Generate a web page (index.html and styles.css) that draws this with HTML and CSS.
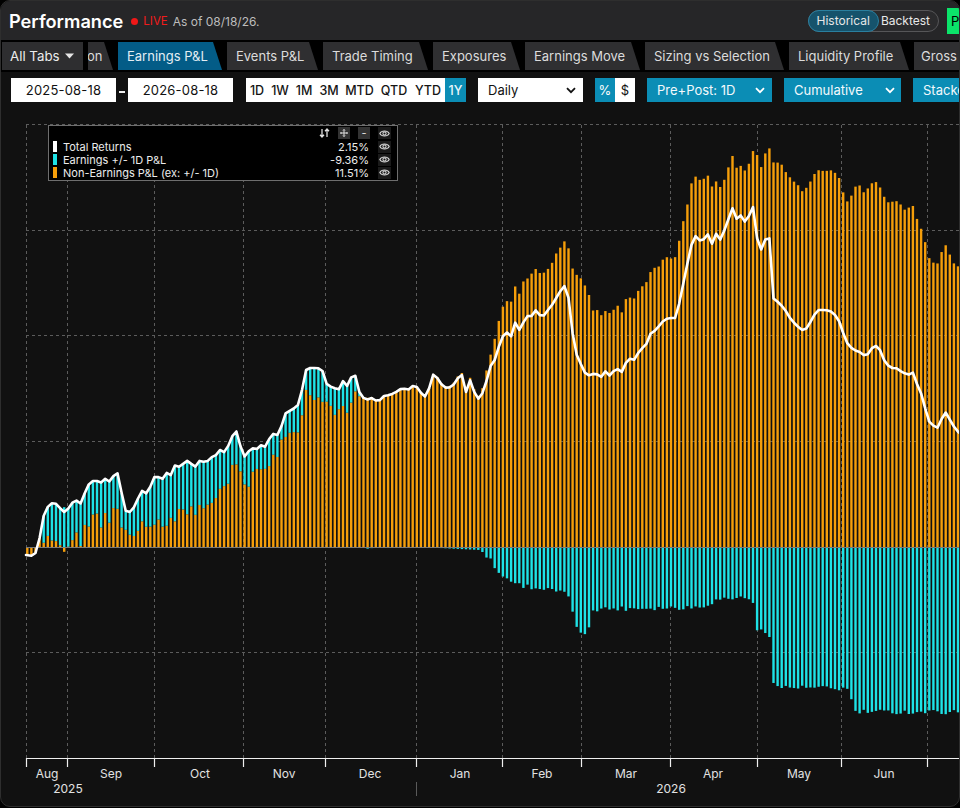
FILE: index.html
```html
<!DOCTYPE html>
<html lang="en">
<head>
<meta charset="utf-8">
<title>Performance</title>
<link rel="stylesheet" href="styles.css">
</head>
<body>
<div class="panel">
  <header class="topbar">
    <div class="title-group">
      <h1 class="title">Performance</h1>
      <span class="live-dot"></span>
      <span class="live">LIVE</span>
      <span class="asof">As of 08/18/26.</span>
    </div>
    <div class="top-right">
      <div class="toggle">
        <span class="toggle-opt active">Historical</span>
        <span class="toggle-opt">Backtest</span>
      </div>
      <div class="green-btn">P</div>
    </div>
  </header>

  <nav class="tabs">
    <div class="tab all">All Tabs <svg class="caret" width="9" height="6" viewBox="0 0 9 6"><path d="M0 0.5H9L4.5 5.5Z" fill="#e6e6e6"/></svg></div>
    <div class="tab partial">on</div>
    <div class="tab active w104">Earnings P&amp;L</div>
    <div class="tab w91">Events P&amp;L</div>
    <div class="tab w105">Trade Timing</div>
    <div class="tab w87">Exposures</div>
    <div class="tab w115">Earnings Move</div>
    <div class="tab w139">Sizing vs Selection</div>
    <div class="tab w120">Liquidity Profile</div>
    <div class="tab w80">Gross</div>
  </nav>

  <div class="controls">
    <div class="date">2025-08-18</div>
    <span class="dash"></span>
    <div class="date">2026-08-18</div>
    <div class="periods">
      <span class="per p22">1D</span>
      <span class="per p24">1W</span>
      <span class="per p24">1M</span>
      <span class="per p26">3M</span>
      <span class="per p35">MTD</span>
      <span class="per p34">QTD</span>
      <span class="per p34">YTD</span>
      <span class="per p21 on">1Y</span>
    </div>
    <div class="select white daily">Daily<svg class="chev" width="10" height="7" viewBox="0 0 10 7"><path d="M1 1.2L5 5.2L9 1.2" fill="none" stroke="#111" stroke-width="1.8"/></svg></div>
    <div class="unit">
      <span class="u on">%</span>
      <span class="u">$</span>
    </div>
    <div class="select teal prepost">Pre+Post: 1D<svg class="chev" width="10" height="7" viewBox="0 0 10 7"><path d="M1 1.2L5 5.2L9 1.2" fill="none" stroke="#fff" stroke-width="1.8"/></svg></div>
    <div class="select teal cumul">Cumulative<svg class="chev" width="10" height="7" viewBox="0 0 10 7"><path d="M1 1.2L5 5.2L9 1.2" fill="none" stroke="#fff" stroke-width="1.8"/></svg></div>
    <div class="select teal stacked">Stacked</div>
  </div>

  <div class="chart">
    <svg id="chart" class="chart-svg" xmlns="http://www.w3.org/2000/svg"></svg>
    <div class="legend">
      <div class="legend-head">
        <span class="lg-icon sort"><svg width="11" height="10" viewBox="0 0 11 10"><path d="M3 1V9M1 6.8L3 9L5 6.8M8 9V1M6 3.2L8 1L10 3.2" fill="none" stroke="#e0e0e0" stroke-width="1.3"/></svg></span>
        <span class="lg-icon box"><svg width="8" height="8" viewBox="0 0 8 8"><path d="M4 0.5V7.5M0.5 4H7.5M3 1.5L4 0.5L5 1.5M3 6.5L4 7.5L5 6.5M1.5 3L0.5 4L1.5 5M6.5 3L7.5 4L6.5 5" fill="none" stroke="#e0e0e0" stroke-width="1"/></svg></span>
        <span class="lg-icon box minus">-</span>
        <span class="lg-icon eye"><svg width="11" height="9" viewBox="0 0 11 9"><path d="M0.8 4.5C2.5 1.2 8.5 1.2 10.2 4.5C8.5 7.8 2.5 7.8 0.8 4.5Z" fill="none" stroke="#d0d0d0" stroke-width="1.1"/><circle cx="5.5" cy="4.5" r="1.6" fill="none" stroke="#d0d0d0" stroke-width="1.1"/></svg></span>
      </div>
      <div class="legend-row">
        <span class="sw sw-white"></span><span class="lg-name">Total Returns</span><span class="lg-val">2.15%</span>
        <span class="lg-icon eye"><svg width="11" height="9" viewBox="0 0 11 9"><path d="M0.8 4.5C2.5 1.2 8.5 1.2 10.2 4.5C8.5 7.8 2.5 7.8 0.8 4.5Z" fill="none" stroke="#d0d0d0" stroke-width="1.1"/><circle cx="5.5" cy="4.5" r="1.6" fill="none" stroke="#d0d0d0" stroke-width="1.1"/></svg></span>
      </div>
      <div class="legend-row">
        <span class="sw sw-cyan"></span><span class="lg-name">Earnings +/- 1D P&amp;L</span><span class="lg-val">-9.36%</span>
        <span class="lg-icon eye"><svg width="11" height="9" viewBox="0 0 11 9"><path d="M0.8 4.5C2.5 1.2 8.5 1.2 10.2 4.5C8.5 7.8 2.5 7.8 0.8 4.5Z" fill="none" stroke="#d0d0d0" stroke-width="1.1"/><circle cx="5.5" cy="4.5" r="1.6" fill="none" stroke="#d0d0d0" stroke-width="1.1"/></svg></span>
      </div>
      <div class="legend-row">
        <span class="sw sw-orange"></span><span class="lg-name">Non-Earnings P&amp;L (ex: +/- 1D)</span><span class="lg-val">11.51%</span>
        <span class="lg-icon eye"><svg width="11" height="9" viewBox="0 0 11 9"><path d="M0.8 4.5C2.5 1.2 8.5 1.2 10.2 4.5C8.5 7.8 2.5 7.8 0.8 4.5Z" fill="none" stroke="#d0d0d0" stroke-width="1.1"/><circle cx="5.5" cy="4.5" r="1.6" fill="none" stroke="#d0d0d0" stroke-width="1.1"/></svg></span>
      </div>
    </div>
  </div>
</div>
<script src="script.js"></script>
</body>
</html>
```

FILE: styles.css
```css
* { box-sizing: border-box; margin: 0; padding: 0; }
html, body { background: #000; }
body {
  width: 960px;
  height: 808px;
  overflow: hidden;
  font-family: Inter, "Noto Sans", "Liberation Sans", sans-serif;
  color: #e6e6e6;
}
.panel {
  width: 960px;
  height: 807px;
  border: 1px solid #2e2e2e;
  border-radius: 10px;
  overflow: hidden;
  background: #111;
  display: flex;
  flex-direction: column;
}

/* header */
.topbar {
  height: 39px;
  flex: none;
  background: #262628;
  display: flex;
  align-items: center;
  justify-content: space-between;
  padding-left: 8px;
}
.title-group { display: flex; align-items: center; }
.title { font-size: 18.2px; font-weight: 600; color: #fff; margin-right: 8px; }
.live-dot { width: 7px; height: 7px; border-radius: 50%; background: #f01818; margin-right: 5px; margin-top: 1px; flex: none; }
.live { font-size: 11.5px; color: #f01c1c; margin-right: 5px; margin-top: 1px; }
.asof { font-size: 12px; color: #bdbdbd; margin-top: 1px; }
.top-right { display: flex; align-items: center; margin-right: -18px; }
.toggle {
  display: flex;
  height: 22px;
  border: 1px solid #565658;
  border-radius: 11px;
  background: #2b2b2d;
  margin-right: 8px;
  font-size: 12px;
  color: #e8e8e8;
}
.toggle-opt { display: flex; align-items: center; padding: 0 8px 0 2px; }
.toggle-opt.active {
  background: #16536c;
  border: 1px solid #2a7f9f;
  border-radius: 11px;
  margin: -1px 0 -1px -1px;
  padding: 0 8px 0 8px;
}
.green-btn {
  width: 30px;
  height: 26px;
  background: #0be46a;
  color: #000;
  font-size: 13px;
  line-height: 26px;
  padding-left: 4px;
}

/* tabs */
.tabs {
  height: 32px;
  flex: none;
  background: #000;
  display: flex;
  align-items: flex-start;
  gap: 5px;
  padding: 2px 0 0 1px;
  overflow: hidden;
  white-space: nowrap;
}
.tab {
  flex: none;
  height: 28px;
  line-height: 28px;
  font-size: 13px;
  color: #dcdcdc;
  background: #2f2f31;
  padding-left: 9px;
  overflow: hidden;
  clip-path: polygon(0 0, calc(100% - 9px) 0, 100% 100%, 0 100%);
}
.tab.all {
  width: 81px;
  clip-path: none;
  padding-left: 8px;
  display: flex;
  align-items: center;
  gap: 5px;
  background: #2e2e30;
  color: #ececec;
  font-size: 13.3px;
}
.tab.partial { width: 25px; padding-left: 0; text-indent: -1px; }
.tab.active { background: #035c87; color: #e4eef4; }
.w104 { width: 104px; }
.w91 { width: 91px; }
.w105 { width: 105px; }
.w87 { width: 87px; }
.w115 { width: 115px; }
.w139 { width: 139px; }
.w120 { width: 120px; }
.w80 { width: 80px; padding-left: 7px; }

/* controls */
.controls {
  height: 37px;
  flex: none;
  display: flex;
  align-items: flex-start;
  padding: 6px 0 0 10px;
  white-space: nowrap;
  overflow: hidden;
}
.controls > * { flex: none; }
.date {
  width: 105px;
  height: 24px;
  line-height: 24px;
  background: #fff;
  color: #111;
  text-align: center;
  font-size: 13px;
  letter-spacing: 0.2px;
}
.dash { width: 6px; height: 2px; background: #eee; margin: 13px 3px 0 3px; }
.periods {
  display: flex;
  height: 24px;
  background: #fff;
  margin-left: 13px;
}
.per {
  flex: none;
  display: flex;
  align-items: center;
  justify-content: center;
  font-size: 12.5px;
  font-weight: 500;
  color: #151515;
}
.per.on { background: #0b8db5; color: #eaf6fb; }
.p21 { width: 21px; } .p22 { width: 22px; } .p24 { width: 24px; } .p26 { width: 26px; }
.p34 { width: 34px; } .p35 { width: 35px; }
.select {
  height: 24px;
  margin-left: 12px;
  display: flex;
  align-items: center;
  justify-content: space-between;
  padding: 0 7px 0 10px;
  font-size: 13px;
}
.select.white { background: #fff; color: #111; }
.select.teal { background: #0b8db5; color: #f2f9fc; }
.daily { width: 105px; }
.prepost { width: 125px; }
.cumul { width: 117px; padding-right: 6px; }
.stacked { width: 100px; }
.unit { display: flex; height: 24px; margin-left: 12px; }
.u { width: 20px; display: flex; align-items: center; justify-content: center; font-size: 13px; background: #fff; color: #111; }
.u.on { background: #0b8db5; color: #fff; }

/* chart */
.chart { flex: 1; position: relative; }
.chart-svg { display: block; width: 958px; height: 100%; }
.chart-svg .grid { stroke: #5c5c5c; stroke-width: 1; stroke-dasharray: 3 3; }
.chart-svg .zero { stroke: #7a7a7a; stroke-width: 1.2; }
.chart-svg .axis { stroke: #f0f0f0; stroke-width: 1.2; }
.chart-svg .ybar { stroke: #5a5a5a; stroke-width: 1; }
.chart-svg .o { fill: #f59e0a; }
.chart-svg .c { fill: #1ee2e6; }
.chart-svg .total { fill: none; stroke: #fff; stroke-width: 2.6; stroke-linejoin: round; stroke-linecap: round; }
.chart-svg .mlabel { fill: #e2e2e2; font-size: 12px; font-family: Inter, "Noto Sans", sans-serif; text-anchor: middle; }

.legend {
  position: absolute;
  left: 47px;
  top: 16px;
  width: 350px;
  height: 56px;
  background: #000;
  border: 1px solid #6e6e6e;
  padding: 0 6px 0 4px;
  font-size: 11px;
  color: #ececec;
}
.legend-head { height: 14px; display: flex; justify-content: flex-end; align-items: center; gap: 8px; }
.legend-row { height: 13px; display: flex; align-items: center; }
.lg-icon { display: flex; align-items: center; justify-content: center; flex: none; }
.lg-icon.sort { width: 11px; }
.lg-icon.box { width: 12px; height: 12px; background: #333; color: #e0e0e0; font-size: 11px; line-height: 12px; }
.lg-icon.eye { width: 13px; height: 12px; background: #1a1a1a; }
.sw { width: 4px; height: 11px; margin-right: 6px; flex: none; }
.sw-white { background: #fff; }
.sw-cyan { background: #1ee2e6; }
.sw-orange { background: #f59e0a; }
.lg-name { flex: 1; }
.lg-val { margin-right: 9px; text-align: right; }
```

FILE: script.js
```js
(function () {
  var svg = document.getElementById('chart');
  var r = svg.getBoundingClientRect();
  svg.setAttribute('viewBox', r.left + ' ' + r.top + ' ' + r.width + ' ' + r.height);

  var Z = 547;
  var T_PTS = [[26,555],[33,556],[38,550],[42,520],[46,510],[50,503],[58,504],[62,512],[66,512],[72,503],[76,500],[80,505],[86,490],[90,482],[96,480],[100,484],[104,478],[110,482],[114,475],[118,473],[122,495],[126,512],[130,512],[136,505],[140,492],[144,490],[148,496],[152,480],[156,475],[162,480],[166,472],[170,477],[176,463],[180,468],[186,460],[190,463],[196,467],[200,460],[206,463],[210,458],[216,455],[220,450],[226,453],[230,440],[236,430],[240,445],[246,460],[250,447],[256,450],[260,445],[266,447],[272,432],[276,438],[282,425],[286,412],[292,410],[298,405],[302,390],[306,370],[310,368],[318,368],[324,372],[328,390],[332,385],[338,392],[342,380],[348,387],[352,375],[356,376],[360,395],[366,400],[372,398],[378,402],[384,396],[390,395],[396,392],[402,388],[408,390],[414,385],[418,388],[424,398],[428,392],[434,372],[440,383],[446,388],[452,387],[458,378],[462,375],[466,392],[470,380],[476,397],[480,400],[486,383],[490,367],[496,358],[500,342],[506,330],[510,340],[516,320],[520,332],[526,315],[530,318],[536,310],[542,318],[548,310],[552,305],[558,295],[564,285],[570,302],[574,350],[578,357],[584,372],[590,376],[596,372],[600,380],[604,370],[610,376],[616,368],[622,372],[628,358],[634,360],[640,350],[646,345],[650,334],[656,330],[662,322],[668,318],[676,318],[680,300],[686,270],[693,238],[697,235],[702,245],[706,232],[710,237],[713,247],[717,230],[721,242],[725,228],[730,215],[733,207],[737,220],[741,215],[745,222],[748,218],[753,207],[757,238],[761,250],[765,240],[769,233],[771,260],[773,298],[778,302],[784,308],[790,318],[796,325],[802,330],[808,328],[812,318],[818,310],[826,310],[832,312],[838,318],[842,330],[848,345],[854,350],[860,352],[866,357],[872,348],[878,345],[884,360],[890,368],[896,368],[902,372],[908,375],[914,372],[918,388],[922,395],[928,420],[932,425],[938,428],[942,418],[946,412],[950,420],[956,430],[962,435]];
  var E_PTS = [[26,0],[40,0],[44,25],[50,30],[70,35],[100,39],[118,37],[124,25],[128,20],[140,35],[160,50],[200,47],[240,32],[280,18],[300,22],[310,27],[340,23],[355,19],[360,2],[365,-2],[380,0],[420,0],[480,-3],[486,-8],[492,-15],[500,-28],[520,-38],[560,-45],[570,-50],[576,-80],[580,-88],[588,-85],[592,-62],[700,-60],[720,-52],[752,-50],[756,-82],[770,-88],[774,-140],[850,-142],[853,-165],[962,-165]];

  function interp(a, x) {
    if (x <= a[0][0]) return a[0][1];
    for (var k = 1; k < a.length; k++) {
      if (x <= a[k][0]) {
        var x0 = a[k-1][0], y0 = a[k-1][1], x1 = a[k][0], y1 = a[k][1];
        return y0 + (y1 - y0) * (x - x0) / (x1 - x0);
      }
    }
    return a[a.length-1][1];
  }
  function rnd(i) { var s = Math.sin(i * 127.1 + 311.7) * 43758.5453; return s - Math.floor(s); }
  function rect(x, y, w, h, c) {
    return '<rect class="' + c + '" x="' + x.toFixed(2) + '" y="' + y.toFixed(2) + '" width="' + w + '" height="' + Math.max(h, 0).toFixed(2) + '"/>';
  }

  var out = '';
  var vx = [26, 67, 154, 243, 325, 416, 502, 581, 670, 757, 841, 927];
  var hy = [124.5, 230.5, 335.5, 441.5, 652.5];
  hy.forEach(function (y) { out += '<line class="grid" x1="26" x2="962" y1="' + y + '" y2="' + y + '"/>'; });
  vx.forEach(function (x) { out += '<line class="grid" x1="' + (x + 0.5) + '" x2="' + (x + 0.5) + '" y1="125" y2="758"/>'; });

  var W = 2.4, P = 4.1;
  var line = [[26, 555]];
  for (var i = 0; ; i++) {
    var cx = 27.3 + P * i;
    if (cx > 964) break;
    var T = Z - interp(T_PTS, cx);
    var E = interp(E_PTS, cx);
    if (cx > 42 && cx < 358) E += (rnd(i) - 0.5) * 14;
    else if (E < -5) E += (rnd(i) - 0.5) * 5;
    var O = T - E;
    var x0 = cx - W / 2;
    if (O >= 0) out += rect(x0, Z - O, W, O, 'o');
    else out += rect(x0, Z, W, -O, 'o');
    if (E >= 0) {
      var b = O > 0 ? O : 0;
      out += rect(x0, Z - b - E, W, E, 'c');
    } else {
      var b2 = O < 0 ? -O : 0;
      out += rect(x0, Z + b2, W, -E, 'c');
    }
    if (cx > 30) line.push([cx, Z - T]);
  }

  out += '<line class="zero" x1="26" x2="962" y1="547.5" y2="547.5"/>';
  out += '<path class="total" d="M' + line.map(function (p) { return p[0].toFixed(1) + ' ' + p[1].toFixed(1); }).join(' L') + '"/>';

  out += '<line class="axis" x1="26" x2="962" y1="758.5" y2="758.5"/>';
  vx.forEach(function (x) { out += '<line class="axis" x1="' + (x + 0.5) + '" x2="' + (x + 0.5) + '" y1="758" y2="767"/>'; });
  var labels = [['Aug',47],['Sep',111],['Oct',200],['Nov',284],['Dec',370],['Jan',460],['Feb',542],['Mar',626],['Apr',713],['May',799],['Jun',884]];
  labels.forEach(function (l) { out += '<text class="mlabel" x="' + l[1] + '" y="778">' + l[0] + '</text>'; });
  out += '<text class="mlabel" x="68" y="793">2025</text>';
  out += '<text class="mlabel" x="671" y="793">2026</text>';
  out += '<line class="ybar" x1="416.5" x2="416.5" y1="782" y2="796"/>';

  svg.innerHTML = out;
})();
```
